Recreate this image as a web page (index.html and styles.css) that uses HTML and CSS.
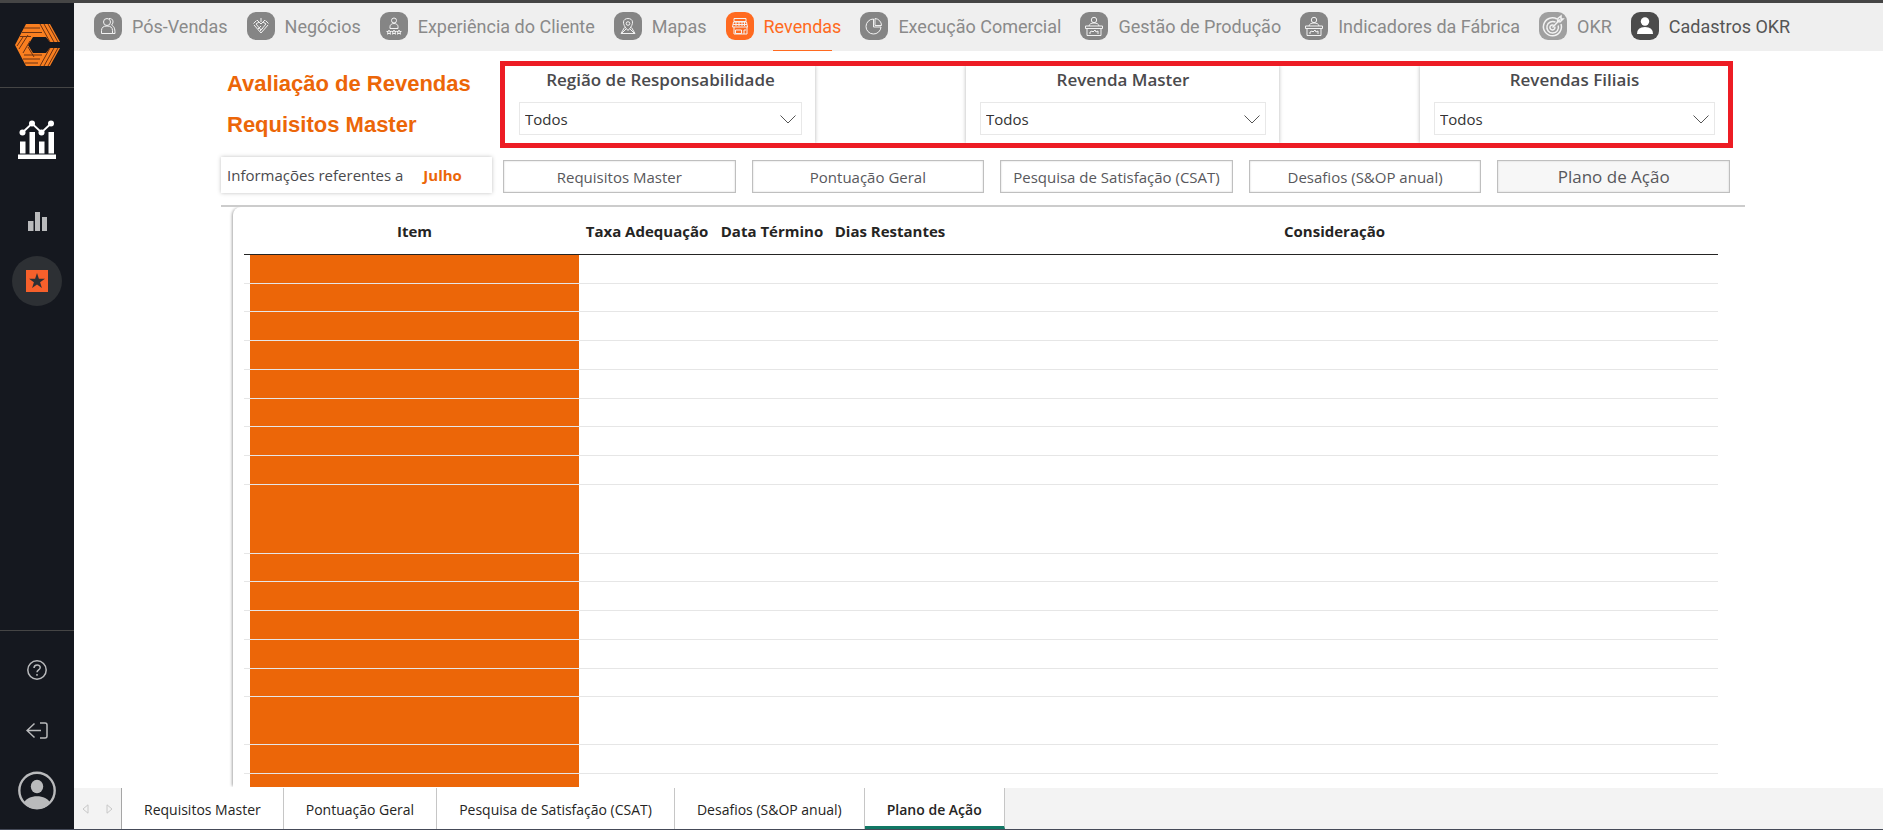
FILE: index.html
```
<!DOCTYPE html>
<html lang="pt-BR">
<head>
    <meta charset="UTF-8">
    <meta name="viewport" content="width=device-width, initial-scale=1.0">
    <title>Avaliação de Revendas</title>
    <link rel="stylesheet" href="styles.css">
</head>
<body>

    <svg class="sprite" aria-hidden="true">
        <symbol id="stand" viewBox="0 0 28 28">
            <circle cx="14" cy="8" r="2.700"/>
            <path d="M9 14c.4-2 2-3 5-3s4.600 1 5 3M5.500 14h17v2.500h-17zM7 16.500v7h14v-7M10 22v-2l2-1 1 1 2-2 1 2 2-1v3"/>
        </symbol>
        <symbol id="chevron" viewBox="0 0 16 9">
            <path d="M.5.5 8 8 15.500.5"/>
        </symbol>
    </svg>

    <div class="app">
        <aside class="sidebar">
            <a href="#" class="logo" aria-label="Início">
                <svg width="45" height="42" viewBox="0 0 45 42">
                    <path class="logo-shape" d="M11 0h24l10 18h-10l-4-5H18l-5 8 5 8h13l4-5h10L35 42H11L0 21z"/>
                    <path class="logo-lines" d="M9 4h16M7 8.500h20M5 12.500h11M25 0l10 18M29 0l10 18M33 0l10 18M4 25l9-14M8 29l7-12M2 22l6-9M13 23l6 10M9 31h18M8 35h17M10 39h13M35 24 25 42M39 24 29 42M43 24 33 42"/>
                </svg>
            </a>
            <nav class="side-menu">
                <a href="#" aria-label="Painéis">
                    <svg width="38" height="39" viewBox="0 0 38 39" fill="#fff">
                        <path d="M0 34.500h38V39H0zM2 21.500h5.500v12H2zM11.500 12H17v21.500h-5.500zM21 21.500h5.500v12H21zM30.500 12H36v21.500h-5.500z"/>
                        <circle cx="4.500" cy="12.500" r="3"/><circle cx="14" cy="3.500" r="3"/><circle cx="23.500" cy="12.500" r="3"/><circle cx="33" cy="3.500" r="3"/>
                        <path d="M4.500 12.500l9.500-9 9.500 9 9.500-9" fill="none" stroke="#fff" stroke-width="1.800"/>
                    </svg>
                </a>
                <a href="#" class="bars" aria-label="Indicadores">
                    <svg width="19" height="19" viewBox="0 0 19 19" fill="#b9babc">
                        <path d="M0 9h5.500v10H0zM7 0h5v19H7zM14 5h5v14h-5z"/>
                    </svg>
                </a>
                <a href="#" class="selected" aria-label="Favoritos">
                    <svg width="22" height="22" viewBox="0 0 22 22">
                        <path fill="#f6602b" d="M0 0h22v22H0z"/>
                        <path fill="#2d3034" d="M11 3l1.900 5.700H19l-4.900 3.600 1.800 5.700-4.900-3.500L6.100 18l1.800-5.700L3 8.700h6.100z"/>
                    </svg>
                </a>
            </nav>
            <nav class="side-footer">
                <a href="#" aria-label="Ajuda">
                    <svg width="20" height="20" viewBox="0 0 20 20" fill="none" stroke="#b9babc" stroke-width="1.500">
                        <circle cx="10" cy="10" r="9.200"/>
                        <path d="M7 8c0-4 6.200-4 6.200-.5C13.200 10 10 9.800 10 12.300M10 14v1.800"/>
                    </svg>
                </a>
                <a href="#" aria-label="Sair">
                    <svg width="22" height="17" viewBox="0 0 22 17" fill="none" stroke="#b9babc" stroke-width="1.500">
                        <path d="M8.500 1.500 1 8.500l7.500 7M1 8.500h14M14 1h5q2 0 2 2v11q0 2-2 2h-5"/>
                    </svg>
                </a>
                <a href="#" class="profile" aria-label="Perfil">
                    <svg width="38" height="39" viewBox="0 0 38 39">
                        <circle cx="19" cy="19.500" r="17.700" fill="none" stroke="#b9babc" stroke-width="2.400"/>
                        <ellipse cx="19" cy="15.500" rx="6.200" ry="6.800" fill="#b9babc"/>
                        <path d="M6 32c3-9 23-9 26 0-6 8-20 8-26 0z" fill="#b9babc"/>
                    </svg>
                </a>
            </nav>
        </aside>

        <main class="content">
            <nav class="topnav">
                <a href="#">
                    <svg class="nav-icon" viewBox="0 0 28 28"><circle cx="13" cy="10" r="3.500"/><path d="M7.500 21.500v-3q0-4.500 5.500-4.500t5.500 4.500v3zM15 6.500c4.500-.5 5 4.500 2.500 6.500 2.500 1.500 3.500 3 3.500 8.500h-2.500"/></svg>
                    Pós-Vendas
                </a>
                <a href="#">
                    <svg class="nav-icon" viewBox="0 0 28 28"><path d="M7 13l7 8 7-8M9 12l5 6 5-6-3-2-2 2-2-2zM6.500 11.500l3-3M21.500 11.500l-3-3M10 8l2 2M18 8l-2 2M14 6v4M11 17l3-3M13 19l3-3"/></svg>
                    Negócios
                </a>
                <a href="#">
                    <svg class="nav-icon" viewBox="0 0 28 28"><circle cx="14" cy="8.500" r="2.500"/><path d="M10 16.500v-2c0-4 8-4 8 0v2zM9 18l.6 1.500h1.700l-1.300 1 .5 1.700L9 21.200l-1.500 1 .5-1.700-1.300-1h1.700zM14 18l.6 1.500h1.700l-1.300 1 .5 1.700-1.500-1-1.500 1 .5-1.700-1.300-1h1.700zM19 18l.6 1.500h1.700l-1.300 1 .5 1.700-1.500-1-1.500 1 .5-1.700-1.300-1h1.700z"/></svg>
                    Experiência do Cliente
                </a>
                <a href="#">
                    <svg class="nav-icon" viewBox="0 0 28 28"><circle cx="14" cy="11.500" r="1.800"/><path d="M14 18.500c-7-7-5-12 0-12s7 5 0 12zM10.500 15.500 7 21.500h14l-3.500-6M8 21l4-4M20 21l-4-4"/></svg>
                    Mapas
                </a>
                <a href="#" class="active">
                    <svg class="nav-icon" viewBox="0 0 28 28"><path d="M8 6.500h12v3H8zM7.500 10h13l1 5h-15zM8 15v7h13v-7M9.500 18h6v3.500h-6zM18 22v-4h2M10 10v4M13 10v4M16 10v4M18.500 10v4M7 12.500h14"/></svg>
                    Revendas
                </a>
                <a href="#">
                    <svg class="nav-icon" viewBox="0 0 28 28"><path d="M13.500 7a7.500 7.500 0 1 0 7.500 8h-7.500zM15 6.500a7 7 0 0 1 6.500 7H15z"/></svg>
                    Execução Comercial
                </a>
                <a href="#">
                    <svg class="nav-icon"><use href="#stand"/></svg>
                    Gestão de Produção
                </a>
                <a href="#">
                    <svg class="nav-icon"><use href="#stand"/></svg>
                    Indicadores da Fábrica
                </a>
                <a href="#" class="okr">
                    <svg class="nav-icon" viewBox="0 0 28 28"><path d="M18 7a9 9 0 1 0 4 5M16.500 10.200a5.800 5.800 0 1 0 2.700 3.300M14.500 13.200a2.500 2.500 0 1 0 1.300 1.500M13.500 15.500 21 7.500M18.500 9.500l.5-3 3-2.500v3h2l-3 3z"/></svg>
                    OKR
                </a>
                <a href="#" class="cadastros">
                    <svg class="nav-icon" viewBox="0 0 28 28"><circle cx="14" cy="9.500" r="4.200"/><path d="M6 22q0-7 8-7t8 7z"/></svg>
                    Cadastros OKR
                </a>
            </nav>

            <section class="report">
                <div class="report-head">
                    <h1>Avaliação de Revendas<br>Requisitos Master</h1>
                    <div class="filters">
                        <div class="filter">
                            <label for="regiao">Região de Responsabilidade</label>
                            <div class="dropdown">
                                <select id="regiao"><option>Todos</option></select>
                                <svg><use href="#chevron"/></svg>
                            </div>
                        </div>
                        <div class="filter">
                            <label for="master">Revenda Master</label>
                            <div class="dropdown">
                                <select id="master"><option>Todos</option></select>
                                <svg><use href="#chevron"/></svg>
                            </div>
                        </div>
                        <div class="filter">
                            <label for="filiais">Revendas Filiais</label>
                            <div class="dropdown">
                                <select id="filiais"><option>Todos</option></select>
                                <svg><use href="#chevron"/></svg>
                            </div>
                        </div>
                    </div>
                </div>

                <div class="report-tabs">
                    <p class="info">Informações referentes a <strong>Julho</strong></p>
                    <div class="buttons">
                        <button type="button">Requisitos Master</button>
                        <button type="button">Pontuação Geral</button>
                        <button type="button">Pesquisa de Satisfação (CSAT)</button>
                        <button type="button">Desafios (S&amp;OP anual)</button>
                        <button type="button" class="current">Plano de Ação</button>
                    </div>
                </div>

                <div class="table-area">
                    <div class="panel">
                        <table>
                            <colgroup>
                                <col class="col-item">
                                <col class="col-taxa">
                                <col class="col-data">
                                <col class="col-dias">
                                <col>
                            </colgroup>
                            <thead>
                                <tr>
                                    <th>Item</th>
                                    <th>Taxa Adequação</th>
                                    <th>Data Término</th>
                                    <th>Dias Restantes</th>
                                    <th>Consideração</th>
                                </tr>
                            </thead>
                            <tbody>
                                <tr><td></td><td></td><td></td><td></td><td></td></tr>
                                <tr><td></td><td></td><td></td><td></td><td></td></tr>
                                <tr><td></td><td></td><td></td><td></td><td></td></tr>
                                <tr><td></td><td></td><td></td><td></td><td></td></tr>
                                <tr><td></td><td></td><td></td><td></td><td></td></tr>
                                <tr><td></td><td></td><td></td><td></td><td></td></tr>
                                <tr><td></td><td></td><td></td><td></td><td></td></tr>
                                <tr><td></td><td></td><td></td><td></td><td></td></tr>
                                <tr class="three-lines"><td></td><td></td><td></td><td></td><td></td></tr>
                                <tr><td></td><td></td><td></td><td></td><td></td></tr>
                                <tr><td></td><td></td><td></td><td></td><td></td></tr>
                                <tr><td></td><td></td><td></td><td></td><td></td></tr>
                                <tr><td></td><td></td><td></td><td></td><td></td></tr>
                                <tr><td></td><td></td><td></td><td></td><td></td></tr>
                                <tr class="two-lines"><td></td><td></td><td></td><td></td><td></td></tr>
                                <tr><td></td><td></td><td></td><td></td><td></td></tr>
                                <tr><td></td><td></td><td></td><td></td><td></td></tr>
                            </tbody>
                        </table>
                    </div>
                </div>
            </section>

            <nav class="pages">
                <div class="arrows">
                    <button type="button" aria-label="Página anterior"><svg width="7" height="10" viewBox="0 0 7 10"><path d="M6 .8v8.400L1 5z"/></svg></button>
                    <button type="button" aria-label="Próxima página"><svg width="7" height="10" viewBox="0 0 7 10"><path d="M1 .8v8.400L6 5z"/></svg></button>
                </div>
                <a href="#">Requisitos Master</a>
                <a href="#">Pontuação Geral</a>
                <a href="#">Pesquisa de Satisfação (CSAT)</a>
                <a href="#">Desafios (S&amp;OP anual)</a>
                <a href="#" class="open">Plano de Ação</a>
            </nav>
        </main>
    </div>

</body>
</html>
```
FILE: styles.css
```
* {
    box-sizing: border-box;
}

body {
    margin: 0;
    font-family: "Open Sans", "Noto Sans", sans-serif;
    font-size: 15px;
    color: #4a4a4d;
    background-color: #fff;
}

a {
    color: inherit;
    text-decoration: none;
}

.sprite {
    display: none;
}

.app {
    display: flex;
    height: 100vh;
    overflow: hidden;
    border-top: 3px solid #454545;
    border-bottom: 1px solid #454a58;
}

/* sidebar */
.sidebar {
    display: flex;
    flex-direction: column;
    flex: none;
    width: 74px;
    background-color: #15181f;
}

.sidebar a {
    display: flex;
    align-items: center;
    justify-content: center;
}

.logo {
    height: 85px;
    border-bottom: 1px solid #454545;
}

.logo-shape {
    fill: #f97f20;
}

.logo-lines {
    fill: none;
    stroke: #6b3213;
    stroke-width: 1;
}

.side-menu {
    display: flex;
    flex-direction: column;
    align-items: center;
    flex: 1;
    padding-top: 32px;
}

.side-menu .bars {
    height: 50px;
    margin: 37px 0 10px;
}

.side-menu .selected {
    width: 50px;
    height: 50px;
    border-radius: 50%;
    background-color: #2d3034;
}

.side-footer {
    display: flex;
    flex-direction: column;
    align-items: center;
    gap: 42px;
    height: 199px;
    padding-top: 29px;
    border-top: 1px solid #454545;
}

.side-footer .profile {
    margin-top: -10px;
}

.content {
    display: flex;
    flex-direction: column;
    flex: 1;
    min-width: 0;
}

/* top menu */
.topnav {
    display: flex;
    gap: 19px;
    flex: none;
    height: 48px;
    padding-left: 20px;
    background-color: #efefef;
    color: #8a8a8a;
    font-family: Roboto, sans-serif;
    font-size: 18px;
    white-space: nowrap;
}

.topnav a {
    display: flex;
    align-items: center;
    gap: 10px;
    height: 48px;
    padding-bottom: 2px;
}

.nav-icon {
    width: 28px;
    height: 28px;
    border-radius: 9px;
    background-color: #858585;
    fill: none;
    stroke: #f2f2f2;
    stroke-width: 1;
}

.topnav .active {
    position: relative;
    color: #ff6a20;
}

.topnav .active::after {
    content: "";
    position: absolute;
    right: 9px;
    bottom: 0;
    width: 59px;
    height: 1px;
    background-color: #ff6a20;
}

.active .nav-icon {
    background-color: #ff6a20;
}

.okr .nav-icon {
    background-color: #a0a0a0;
    stroke-width: 1.5;
}

.topnav .cadastros {
    color: #555;
}

.cadastros .nav-icon {
    background-color: #4b4b4b;
    fill: #fff;
    stroke: none;
}

/* report */
.report {
    display: flex;
    flex-direction: column;
    flex: 1;
    min-height: 0;
    padding: 10px 138px 0 147px;
}

.report-head {
    display: flex;
    height: 87px;
    margin-right: 12px;
}

h1 {
    width: 279px;
    margin: 0;
    padding: 2px 0 0 6px;
    font-family: "Liberation Sans", Arial, sans-serif;
    font-size: 22px;
    line-height: 41px;
    color: #ec6608;
    white-space: nowrap;
}

.filters {
    display: grid;
    grid-template-columns: 310fr 151fr 313fr 141fr 308fr;
    flex: 1;
    overflow: hidden;
    border: 5px solid #ed1c24;
}

.filter {
    padding: 1px 13px 0 14px;
    text-align: center;
    box-shadow: 0 0 4px rgba(0, 0, 0, 0.3);
}

.filter:nth-child(2) {
    grid-column: 3;
}

.filter:nth-child(3) {
    grid-column: 5;
}

.filter label {
    display: block;
    height: 35px;
    font-size: 17px;
    font-weight: 600;
    line-height: 25px;
}

.dropdown {
    position: relative;
    height: 33px;
}

.dropdown select {
    width: 100%;
    height: 33px;
    padding: 1px 5px 0;
    border: 1px solid #e8e8e8;
    border-radius: 0;
    background-color: #fff;
    color: #333;
    font-family: inherit;
    font-size: 15px;
    appearance: none;
}

.dropdown svg {
    position: absolute;
    top: 13px;
    right: 6px;
    width: 16px;
    height: 9px;
    fill: none;
    stroke: #555;
    pointer-events: none;
}

.report-tabs {
    display: flex;
    align-items: flex-end;
    gap: 11px;
    height: 45px;
    margin-right: 15px;
}

.info {
    width: 271px;
    height: 36px;
    margin: 0;
    padding-left: 6px;
    line-height: 36px;
    white-space: nowrap;
    box-shadow: 0 0 4px rgba(0, 0, 0, 0.25);
}

.info strong {
    margin-left: 16px;
    color: #ec6608;
}

.buttons {
    display: grid;
    grid-template-columns: repeat(5, 1fr);
    gap: 16px;
    flex: 1;
}

.buttons button {
    height: 33px;
    padding: 0;
    border: 1px solid #bfbfbf;
    box-shadow: inset 0 0 2px #ccc;
    background-color: #fff;
    color: #58585c;
    font-family: inherit;
    font-size: 15px;
    white-space: nowrap;
}

.buttons .current {
    background-color: #f7f7f7;
    font-size: 17px;
}

.table-area {
    flex: 1;
    min-height: 0;
    margin-top: 12px;
    padding: 0 13px 0 12px;
    border-top: 2px solid #ccc;
    overflow: hidden;
}

.panel {
    height: 100%;
    padding: 0 14px 0 11px;
    border-radius: 8px 0 0 0;
    box-shadow: -2px 0 3px -1px rgba(0, 0, 0, 0.35);
}

table {
    width: 100%;
    table-layout: fixed;
    border-collapse: separate;
    border-spacing: 0;
}

.col-item {
    width: 335px;
}

.col-taxa {
    width: 136px;
}

.col-data {
    width: 114px;
}

.col-dias {
    width: 122px;
}

th {
    height: 48px;
    padding: 0;
    border-bottom: 1px solid #252423;
    color: #252423;
    font-size: 15px;
    white-space: nowrap;
}

th:first-child {
    padding-left: 6px;
}

td {
    height: 29px;
    padding: 0;
    border-bottom: 1px solid #e6e6e6;
}

tr:nth-child(4n+2) td {
    height: 28px;
}

td:first-child {
    background: linear-gradient(to right, #fff 6px, #ec6608 6px);
}

.three-lines td {
    height: 69px;
}

.two-lines td {
    height: 48px;
}

/* page tabs */
.pages {
    display: flex;
    flex: none;
    height: 42px;
    border-top: 1px solid #fff;
    background-color: #f3f3f3;
    color: #252423;
    font-size: 14px;
}

.arrows {
    display: flex;
    align-items: center;
    justify-content: center;
    gap: 17px;
    width: 48px;
    border-right: 1px solid #a6a6a6;
}

.arrows button {
    display: flex;
    padding: 0;
    border: none;
    background: none;
}

.arrows svg {
    fill: none;
    stroke: #c8c8c8;
}

.pages a {
    padding: 3px 22px 0;
    border-right: 1px solid #c6c6c6;
    background-color: #fff;
    line-height: 38px;
}

.pages .open {
    border-bottom: 3px solid #117865;
    font-weight: 600;
}
```
